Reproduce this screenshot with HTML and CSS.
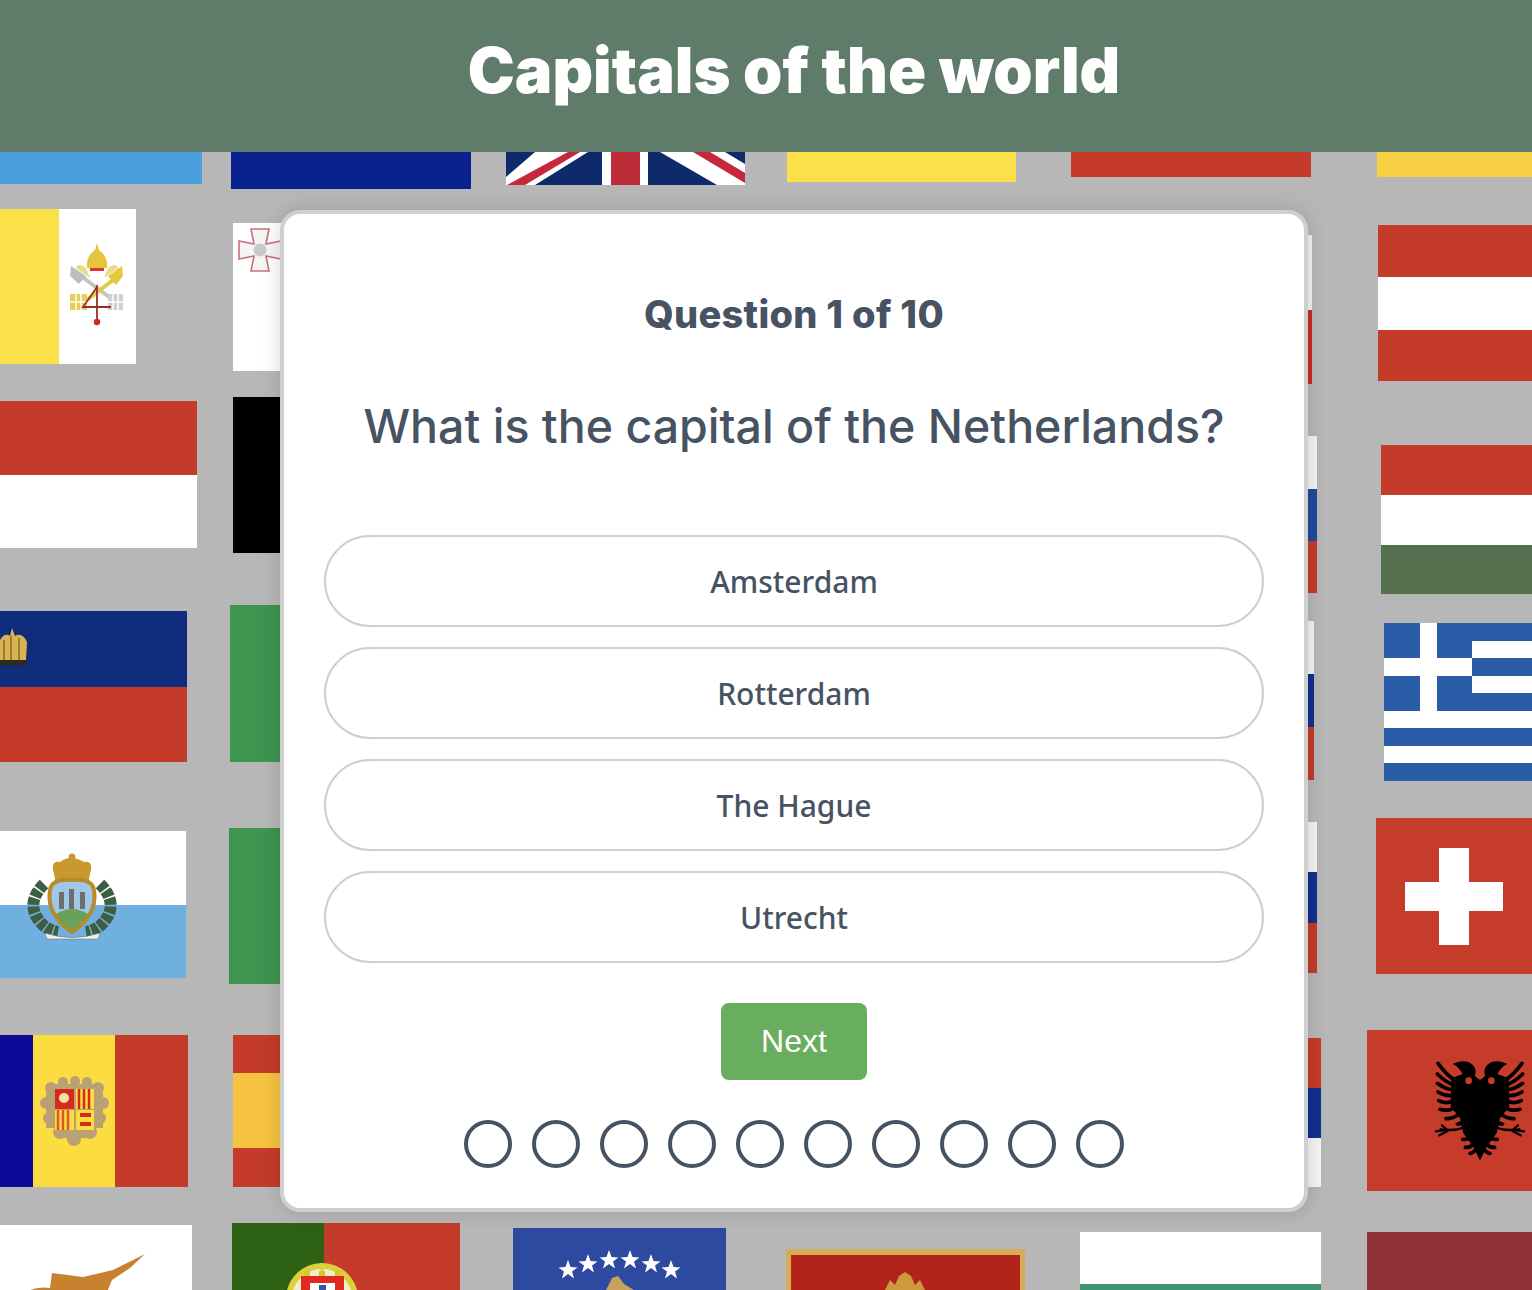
FILE: index.html
```html
<!DOCTYPE html>
<html lang="en">
<head>
  <meta charset="UTF-8">
  <meta name="viewport" content="width=device-width, initial-scale=1.0">
  <title>Capitals of the world</title>
  <link rel="stylesheet" href="styles.css">
</head>
<body>

  <div class="page">
    <!-- flag wall behind the quiz -->
    <svg class="flags" width="1532" height="1290" viewBox="0 0 1532 1290" aria-hidden="true">
      <!-- top row -->
      <rect x="0" y="140" width="202" height="44" fill="#4a9fdc"/>
      <rect x="231" y="140" width="240" height="49" fill="#0a2290"/>
      <g>
        <rect x="506" y="140" width="239" height="45" fill="#0f2a6b"/>
        <path d="M506 177L535 152H588L535 185H506Z" fill="#fff"/>
        <path d="M507 185L568 152H580L525 185Z" fill="#c5283d"/>
        <path d="M660 152H725L745 164V185H717Z" fill="#fff"/>
        <path d="M693 152H710L745 173V183Z" fill="#c5283d"/>
        <rect x="602" y="140" width="46" height="45" fill="#fff"/>
        <rect x="611" y="140" width="29" height="45" fill="#bd2b38"/>
      </g>
      <rect x="787" y="140" width="229" height="42" fill="#fbe04a"/>
      <rect x="1071" y="140" width="240" height="37" fill="#c43b2a"/>
      <rect x="1377" y="140" width="155" height="37" fill="#f7cf42"/>

      <!-- vatican -->
      <rect x="0" y="209" width="136" height="155" fill="#fff"/>
      <rect x="0" y="209" width="59" height="155" fill="#fbe04a"/>
      <g>
        <path d="M77 273L113 300" stroke="#c4c4c4" stroke-width="4"/>
        <path d="M117 277L83 303" stroke="#e2c93f" stroke-width="4"/>
        <path d="M71 266L86 276L79 284L70 276Z" fill="#bdbdbd"/>
        <path d="M122 266L108 276L116 285L123 276Z" fill="#e2c93f"/>
        <path d="M86 268Q78 262 76 268L90 278ZM108 268Q116 262 118 268L104 278Z" fill="#eadb8a"/>
        <path d="M97 243L99 250Q108 256 107 268H87Q86 256 95 250Z" fill="#e5c53c"/>
        <rect x="90" y="268" width="14" height="3" fill="#e0342a"/>
        <rect x="70" y="294" width="17" height="16" fill="#e5cf5a"/>
        <path d="M76 294V310M81 294V310M70 302H87" stroke="#fff" stroke-width="1.500"/>
        <rect x="108" y="294" width="15" height="16" fill="#cfcfcf"/>
        <path d="M113 294V310M118 294V310M108 302H123" stroke="#fff" stroke-width="1.500"/>
        <path d="M97 285V322M97 287L83 307H111" stroke="#9e2b2b" stroke-width="1.800" fill="none"/>
        <circle cx="97" cy="322" r="3.200" fill="#d0281f"/>
      </g>

      <!-- malta -->
      <rect x="233" y="223" width="60" height="148" fill="#fff"/>
      <path d="M251 229H269L266 244L281 241V259L266 256L269 271H251L254 256L239 259V241L254 244Z" fill="#f5f5f5" stroke="#c9707a" stroke-width="1.600"/>
      <circle cx="260" cy="250" r="6.500" fill="#c9c9c9"/>

      <!-- monaco, estonia -->
      <rect x="0" y="401" width="197" height="74" fill="#c43b2a"/>
      <rect x="0" y="475" width="197" height="73" fill="#fff"/>
      <rect x="233" y="397" width="60" height="156" fill="#000"/>

      <!-- liechtenstein -->
      <rect x="0" y="611" width="187" height="76" fill="#0f2d7c"/>
      <rect x="0" y="687" width="187" height="75" fill="#c43b2a"/>
      <path d="M0 640Q5 632 10 636L12 628L15 636Q22 632 27 642L26 660H0Z" fill="#d9b450"/>
      <path d="M4 640V660M11 636V660M19 638V660" stroke="#5d4a1e" stroke-width="1"/>
      <path d="M0 660H27L26 666H0Z" fill="#2a2a2a"/>
      <rect x="230" y="605" width="60" height="157" fill="#3f9450"/>

      <!-- san marino -->
      <rect x="0" y="831" width="186" height="74" fill="#fff"/>
      <rect x="0" y="905" width="186" height="73" fill="#6fb0e0"/>
      <g>
        <path d="M44 884Q28 900 36 916Q44 930 58 932M100 884Q116 900 108 916Q100 930 86 932" fill="none" stroke="#3e5e40" stroke-width="12" stroke-dasharray="7 1.500"/>
        <path d="M54 874Q50 860 60 862Q70 854 84 862Q94 860 90 874L88 884H56Z" fill="#c8992e"/>
        <circle cx="72" cy="857" r="3.500" fill="#c8992e"/>
        <path d="M50 890Q52 878 72 880Q92 878 94 890Q98 915 72 932Q46 915 50 890Z" fill="#9fc8e6" stroke="#b98a2a" stroke-width="4"/>
        <path d="M56 914Q72 904 88 914Q80 926 72 930Q62 926 56 914Z" fill="#6aa05a"/>
        <rect x="59" y="892" width="5" height="17" fill="#6d6d6d"/>
        <rect x="69" y="889" width="5" height="20" fill="#6d6d6d"/>
        <rect x="80" y="892" width="5" height="17" fill="#6d6d6d"/>
        <path d="M45 933Q72 942 100 933L98 939H47Z" fill="#f1f1f1" stroke="#777" stroke-width=".6"/>
      </g>
      <rect x="229" y="828" width="60" height="156" fill="#3f9450"/>

      <!-- andorra, spain -->
      <rect x="0" y="1035" width="33" height="152" fill="#0c0a96"/>
      <rect x="33" y="1035" width="82" height="152" fill="#fbdd42"/>
      <rect x="115" y="1035" width="73" height="152" fill="#c43b2a"/>
      <g>
        <g fill="#b9a173">
          <circle cx="51" cy="1088" r="6"/><circle cx="63" cy="1082" r="5"/><circle cx="75" cy="1081" r="5"/>
          <circle cx="87" cy="1082" r="5"/><circle cx="98" cy="1088" r="6"/><circle cx="46" cy="1103" r="6"/>
          <circle cx="103" cy="1103" r="6"/><circle cx="49" cy="1118" r="6"/><circle cx="100" cy="1118" r="6"/>
          <circle cx="60" cy="1132" r="7"/><circle cx="90" cy="1132" r="7"/><circle cx="74" cy="1139" r="7"/>
          <rect x="46" y="1084" width="57" height="44"/>
          <rect x="56" y="1120" width="38" height="18"/>
        </g>
        <rect x="55" y="1089" width="19" height="20" fill="#d8291f"/>
        <circle cx="64" cy="1098" r="5" fill="#f5e2a0"/>
        <rect x="76" y="1089" width="18" height="20" fill="#fbdd42"/>
        <path d="M79 1089V1109M84 1089V1109M89 1089V1109" stroke="#d8291f" stroke-width="2.500"/>
        <rect x="55" y="1110" width="19" height="20" fill="#fbdd42"/>
        <path d="M58 1110V1130M63 1110V1130M68 1110V1130" stroke="#e0562a" stroke-width="2.500"/>
        <rect x="76" y="1110" width="18" height="20" fill="#fbdd42"/>
        <path d="M80 1115H91M80 1124H91" stroke="#d8291f" stroke-width="4"/>
      </g>
      <rect x="233" y="1035" width="60" height="152" fill="#c43b2a"/>
      <rect x="233" y="1073" width="60" height="75" fill="#f5c33f"/>

      <!-- right column -->
      <rect x="1290" y="235" width="22" height="75" fill="#f4f4f4"/>
      <rect x="1290" y="310" width="22" height="74" fill="#c92c25"/>
      <rect x="1290" y="436" width="27" height="53" fill="#f4f4f4"/>
      <rect x="1290" y="489" width="27" height="52" fill="#1f4a9e"/>
      <rect x="1290" y="541" width="27" height="52" fill="#c43b2a"/>
      <rect x="1290" y="621" width="24" height="53" fill="#f4f4f4"/>
      <rect x="1290" y="674" width="24" height="53" fill="#12308f"/>
      <rect x="1290" y="727" width="24" height="53" fill="#c43b2a"/>
      <rect x="1290" y="822" width="27" height="50" fill="#f4f4f4"/>
      <rect x="1290" y="872" width="27" height="51" fill="#12308f"/>
      <rect x="1290" y="923" width="27" height="50" fill="#c43b2a"/>
      <rect x="1290" y="1038" width="31" height="50" fill="#c43b2a"/>
      <rect x="1290" y="1088" width="31" height="50" fill="#12308f"/>
      <rect x="1290" y="1138" width="31" height="49" fill="#f4f4f4"/>

      <!-- austria, hungary -->
      <rect x="1378" y="225" width="154" height="52" fill="#c43b2a"/>
      <rect x="1378" y="277" width="154" height="53" fill="#fff"/>
      <rect x="1378" y="330" width="154" height="51" fill="#c43b2a"/>
      <rect x="1381" y="445" width="151" height="50" fill="#c43b2a"/>
      <rect x="1381" y="495" width="151" height="50" fill="#fff"/>
      <rect x="1381" y="545" width="151" height="49" fill="#55704f"/>

      <!-- greece -->
      <rect x="1384" y="623" width="148" height="158" fill="#2b5ca8"/>
      <rect x="1472" y="641" width="60" height="17" fill="#fff"/>
      <rect x="1472" y="676" width="60" height="17" fill="#fff"/>
      <rect x="1384" y="711" width="148" height="17" fill="#fff"/>
      <rect x="1384" y="746" width="148" height="17" fill="#fff"/>
      <rect x="1420" y="623" width="17" height="88" fill="#fff"/>
      <rect x="1384" y="658" width="88" height="18" fill="#fff"/>

      <!-- switzerland -->
      <rect x="1376" y="818" width="156" height="156" fill="#c63c2a"/>
      <rect x="1405" y="882" width="98" height="29" fill="#fff"/>
      <rect x="1439" y="848" width="30" height="97" fill="#fff"/>

      <!-- albania -->
      <rect x="1367" y="1030" width="165" height="161" fill="#c63c2a"/>
      <g transform="translate(1420 1050) scale(.3333)">
        <g id="eagle-half">
          <path d="M180 332L160 290L130 250L120 205L92 170L94 85L128 72Q118 52 98 42Q125 28 150 38Q172 50 165 78L180 90Z" fill="#000"/>
          <circle cx="146" cy="92" r="10" fill="#c63c2a"/>
          <g fill="none" stroke="#000" stroke-width="11" stroke-linecap="round">
            <path d="M100 88Q78 72 54 40"/>
            <path d="M100 104Q76 96 52 72"/>
            <path d="M100 120Q76 118 52 100"/>
            <path d="M100 136Q78 140 54 126"/>
            <path d="M100 152Q80 164 56 152"/>
            <path d="M108 170Q86 186 60 178"/>
            <path d="M120 190Q102 206 78 206"/>
            <path d="M136 212Q126 222 112 222"/>
            <path d="M150 262Q140 270 128 268"/>
            <path d="M160 282Q150 294 136 292"/>
            <path d="M168 298Q160 310 150 310"/>
          </g>
          <path d="M135 232Q100 244 62 238M84 242L66 226M84 242L58 256M72 240L48 244" fill="none" stroke="#000" stroke-width="7" stroke-linecap="round"/>
        </g>
        <use href="#eagle-half" transform="translate(360 0) scale(-1 1)"/>
      </g>

      <!-- bottom row -->
      <rect x="0" y="1225" width="192" height="65" fill="#fff"/>
      <path d="M26 1292Q36 1286 50 1288L52 1273L83 1277L113 1270L145 1254L130 1268L112 1280L107 1292Z" fill="#c8822f"/>
      <rect x="232" y="1223" width="92" height="67" fill="#2d6215"/>
      <rect x="324" y="1223" width="136" height="67" fill="#c43b2a"/>
      <circle cx="322" cy="1299" r="33" fill="#f1efc8" stroke="#dccf3a" stroke-width="6"/>
      <path d="M322 1263V1280" stroke="#dccf3a" stroke-width="3"/>
      <rect x="301" y="1276" width="43" height="14" fill="#e02a20"/>
      <path d="M304 1276v-5h6v5zM319 1276v-5h6v5zM335 1276v-5h6v5z" fill="#d8c23a"/>
      <rect x="310" y="1283" width="25" height="7" fill="#fff"/>
      <rect x="319" y="1285" width="7" height="5" fill="#3a55a8"/>
      <rect x="513" y="1228" width="213" height="62" fill="#2e4aa0"/>
      <g fill="#fff">
        <path d="M568 1260l2.500 7 7 .5-5.500 4 2 7-6-4.500-6 4.500 2-7-5.500-4 7-.5zM588 1254l2.500 7 7 .5-5.500 4 2 7-6-4.500-6 4.500 2-7-5.500-4 7-.5zM609 1250l2.500 7 7 .5-5.500 4 2 7-6-4.500-6 4.500 2-7-5.500-4 7-.5zM630 1250l2.500 7 7 .5-5.500 4 2 7-6-4.500-6 4.500 2-7-5.500-4 7-.5zM651 1254l2.500 7 7 .5-5.500 4 2 7-6-4.500-6 4.500 2-7-5.500-4 7-.5zM671 1260l2.500 7 7 .5-5.500 4 2 7-6-4.500-6 4.500 2-7-5.500-4 7-.5z"/>
      </g>
      <path d="M606 1290L612 1278L618 1276L624 1284L634 1290Z" fill="#c9a25a"/>
      <rect x="786" y="1249" width="239" height="41" fill="#d4ad58"/>
      <rect x="791" y="1255" width="229" height="35" fill="#b2241a"/>
      <path d="M885 1290L890 1280L895 1285L899 1276L905 1272L911 1276L915 1285L920 1280L925 1290Z" fill="#cc9a3c"/>
      <rect x="1080" y="1232" width="241" height="52" fill="#fff"/>
      <rect x="1080" y="1284" width="241" height="6" fill="#3f9470"/>
      <rect x="1367" y="1232" width="165" height="58" fill="#8f3339"/>
    </svg>

    <header class="banner">
      <h1>Capitals of the world</h1>
    </header>

    <main class="stage">
      <section class="quiz-box">
        <h2 class="counter">Question 1 of 10</h2>
        <p class="question">What is the capital of the Netherlands?</p>

        <div class="options">
          <button class="option">Amsterdam</button>
          <button class="option">Rotterdam</button>
          <button class="option">The Hague</button>
          <button class="option">Utrecht</button>
        </div>

        <button class="next">Next</button>

        <div class="dots">
          <span class="dot"></span>
          <span class="dot"></span>
          <span class="dot"></span>
          <span class="dot"></span>
          <span class="dot"></span>
          <span class="dot"></span>
          <span class="dot"></span>
          <span class="dot"></span>
          <span class="dot"></span>
          <span class="dot"></span>
        </div>
      </section>
    </main>
  </div>

</body>
</html>
```

FILE: styles.css
```css
html, body {
  margin: 0;
  padding: 0;
  height: 100%;
  overflow: hidden;
}

body {
  background: #b7b7b7;
  font-family: 'Inter', sans-serif;
}

/* the original layout runs wider than the window, so it is centred at 794 */
.page {
  position: relative;
  width: 1588px;
  height: 1290px;
}

.flags {
  position: absolute;
  top: 0;
  left: 0;
  filter: blur(0.6px);
}

.banner {
  position: relative;
  height: 152px;
  background: #5f7c6b;
  display: flex;
  align-items: center;
  justify-content: center;
}

.banner h1 {
  margin: 0 0 12px;
  color: white;
  font-family: 'Inter', sans-serif;
  font-size: 63px;
  font-weight: 900;
  line-height: 1;
}

.stage {
  position: relative;
  display: flex;
  justify-content: center;
  padding-top: 58px;
}

.quiz-box {
  box-sizing: border-box;
  width: 1028px;
  height: 1002px;
  background: white;
  border: 4px solid #cfcfcf;
  border-radius: 20px;
  box-shadow: 0 0 20px rgba(0,0,0,0.15);
  padding: 0 40px;
  display: flex;
  flex-direction: column;
  align-items: center;
  color: #475362;
}

.counter {
  margin: 77px 0 0;
  font-family: 'Inter', sans-serif;
  font-size: 38px;
  font-weight: 800;
  letter-spacing: 0.3px;
  line-height: 46px;
}

.question {
  margin: 59px 0 0;
  font-family: 'Inter', sans-serif;
  font-size: 46.5px;
  font-weight: 450;
  line-height: 60px;
}

.options {
  width: 100%;
  margin-top: 79px;
  display: flex;
  flex-direction: column;
  gap: 20px;
}

.option {
  height: 92px;
  background: white;
  border: 2px solid #cfcfcf;
  border-radius: 46px;
  color: #475362;
  font-family: 'Noto Sans', sans-serif;
  font-size: 30px;
  font-weight: 500;
  padding: 0;
}

.next {
  margin-top: 40px;
  width: 146px;
  height: 77px;
  background-color: #69ad5e;
  color: white;
  border: none;
  border-radius: 8px;
  font-family: 'Liberation Sans', sans-serif;
  font-size: 32px;
  padding: 0;
}

.dots {
  margin-top: 40px;
  display: flex;
  gap: 20px;
}

.dot {
  box-sizing: border-box;
  width: 48px;
  height: 48px;
  border: 4px solid #475362;
  border-radius: 50%;
}
```
